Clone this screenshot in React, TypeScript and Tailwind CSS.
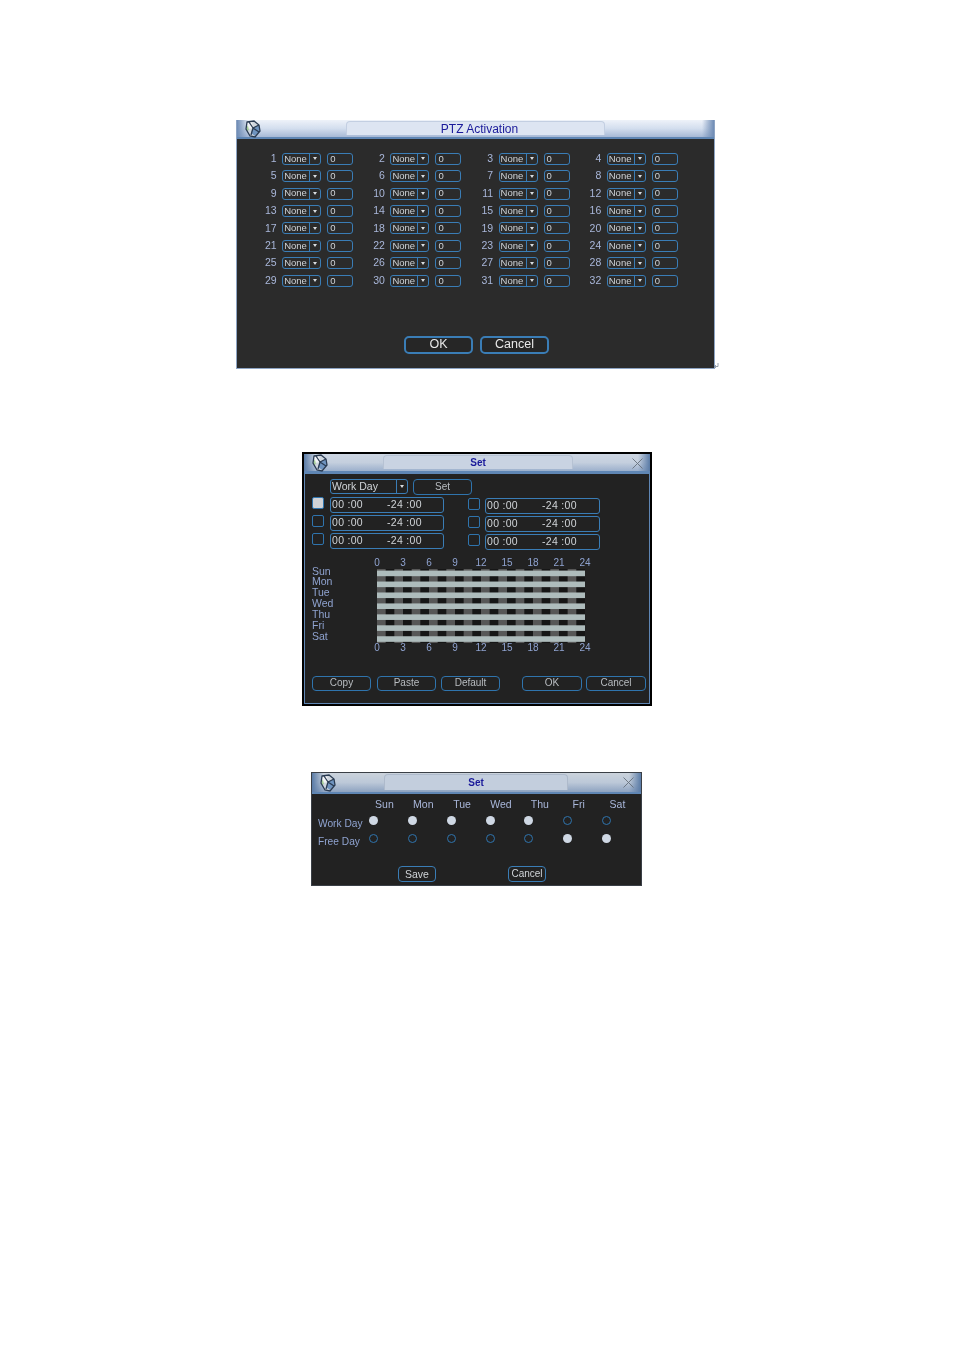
const FONT = { fontFamily: '"Liberation Sans", Arial, sans-serif' };

const HOURS = [0, 3, 6, 9, 12, 15, 18, 21, 24];
const DAYS = ["Sun", "Mon", "Tue", "Wed", "Thu", "Fri", "Sat"];
const WORK = [true, true, true, true, true, false, false];

function Logo() {
  return (
    <svg width="18" height="18" viewBox="0 0 18 18" className="shrink-0">
      <path d="M3 2 L10 1 L15 5 L16 11 L11 17 L6 16 L2 9 Z" fill="#cfd6de" />
      <path d="M3 3 L8 2 L9 8 L4 9 Z" fill="#f2f4f6" />
      <path d="M9 8 L15 5 L16 11 L11 16 L7 13 Z" fill="#6f94c0" />
      <path d="M2 7 L4 6 L5 10 L3 11 Z" fill="#a8cf9a" />
      <path d="M3 2 L10 1 L15 5 L16 11 L11 17 L6 16 L2 9 Z" fill="none" stroke="#2a3b52" strokeWidth="1.3" />
      <path d="M5 2 L9 8 L7 15 M9 8 L15 5 M9 8 L15 12" fill="none" stroke="#2a3b52" strokeWidth="1.3" />
    </svg>
  );
}

function TitleBar({ title, className, tabClassName, close, edge }: { title: string; className: string; tabClassName: string; close?: boolean; edge: string }) {
  return (
    <div className={`flex items-center relative bg-gradient-to-b border-b-2 border-[#5f86b4] ${className}`}>
      <div className={`absolute inset-y-0 left-0 w-[12px] bg-gradient-to-r to-transparent ${edge}`} />
      <div className={`absolute inset-y-0 right-0 w-[12px] bg-gradient-to-l to-transparent ${edge}`} />
      <div className="relative ml-[7px]">
        <Logo />
      </div>
      <div className={`absolute top-[1px] bottom-[2px] rounded-t-[4px] border border-b-0 flex items-center justify-center text-[#1a1a9a] ${tabClassName}`}>
        {title}
      </div>
      {close && (
        <svg width="11" height="11" viewBox="0 0 11 11" className="absolute right-[7px] top-[4px]">
          <path d="M0.5 0.5 L10.5 10.5 M10.5 0.5 L0.5 10.5" stroke="#66707c" strokeWidth="0.9" />
        </svg>
      )}
    </div>
  );
}

function Field({ className, children }: { className: string; children?: React.ReactNode }) {
  return <div className={`border border-[#3a7db6] rounded-[3px] flex items-center shrink-0 text-[#d0d4d8] ${className}`}>{children}</div>;
}

function PtzCell({ n }: { n: number }) {
  return (
    <div className="flex items-center w-[108.2px] h-[17.45px]">
      <span className="w-[31.7px] shrink-0 text-right text-[10.5px] text-[#a9b7da]">{n}</span>
      <Field className="ml-[5.5px] w-[39px] h-[12px] text-[9.5px]">
        <span className="pl-[1px] flex-1">None</span>
        <span className="w-[11px] h-full border-l border-[#3a7db6] flex items-center justify-center">
          <span className="border-x-[2.5px] border-x-transparent border-t-[3px] border-t-[#d8dce0]" />
        </span>
      </Field>
      <Field className="ml-[6px] w-[26px] h-[12px] text-[9.5px] pl-[2px]">0</Field>
    </div>
  );
}

function PtzDialog() {
  return (
    <div className="relative ml-[236px] mt-[120px] w-[479px] h-[249px] flex flex-col border-x border-b border-[#8da4c4] bg-[#2b2b2b] blur-[0.3px]">
      <TitleBar
        title="PTZ Activation"
        className="h-[19px] from-[#eef2f9] via-[#d3deee] to-[#a7b9d6]"
        edge="from-[#6f8cb5]"
        tabClassName="left-[109px] w-[259px] pl-[8px] text-[12px] border-[#c3cfe2] bg-[#dde5f2]"
      />
      <div className="pl-[8px] pt-[11px] flex flex-wrap w-[445px]">
        {Array.from({ length: 32 }, (_, i) => (
          <PtzCell key={i} n={i + 1} />
        ))}
      </div>
      <div className="mt-[46px] ml-[167px] flex gap-[7px]">
        <button className="w-[69px] h-[18px] rounded-[5px] border-2 border-[#3a7db6] text-[12.5px] leading-none text-[#e8e8e8] bg-[#262626]">OK</button>
        <button className="w-[69px] h-[18px] rounded-[5px] border-2 border-[#3a7db6] text-[12.5px] leading-none text-[#e8e8e8] bg-[#262626]">Cancel</button>
      </div>
      <svg width="5" height="5" viewBox="0 0 5 5" className="absolute right-[-5px] bottom-[0px]">
        <path d="M4 0 V3.5 H0.5 M2 2 L0.5 3.5 L2 5" fill="none" stroke="#7f8c99" strokeWidth="0.8" />
      </svg>
    </div>
  );
}

function TimeRow({ mark, w, gap }: { mark?: boolean; w: string; gap: string }) {
  return (
    <div className="flex items-start h-[16px]">
      <span className={`w-[12px] h-[12px] rounded-[2px] border border-[#2f74ad] ${mark ? "bg-[#d0d2d6]" : ""}`} />
      <Field className={`${gap} ${w} h-[16px] text-[10.5px] tracking-[0.3px] pl-[1px]`}>
        <span className="w-[55px]">00 :00</span>
        <span>-24 :00</span>
      </Field>
    </div>
  );
}

function HourRow() {
  return (
    <div className="flex ml-[52px] h-[11px] items-center">
      {HOURS.map((h) => (
        <span key={h} className="w-[26px] text-center text-[10px] leading-none text-[#8fa3d0]">
          {h}
        </span>
      ))}
    </div>
  );
}

function WeekChart() {
  return (
    <svg width="208" height="74" viewBox="0 0 208 74" className="shrink-0">
      <rect width="208" height="74" fill="#161616" />
      {Array.from({ length: 12 }, (_, i) => (
        <rect key={i} x={i * 17.33} y="0" width="8.67" height="74" fill="#575757" />
      ))}
      {DAYS.map((d, i) => (
        <rect key={d} x="0" y={1.6 + i * 10.94} width="208" height="5.6" fill="#aebcbc" />
      ))}
    </svg>
  );
}

function SmallButton({ label, className }: { label: string; className: string }) {
  return (
    <button className={`h-[15.5px] rounded-[4px] border border-[#2f74ad] text-[10px] leading-none text-[#b8bcc0] ${className}`}>{label}</button>
  );
}

function ScheduleDialog() {
  return (
    <div className="ml-[302px] mt-[83px] w-[350px] h-[254px] flex flex-col border-2 border-black bg-[#222222] blur-[0.3px]">
      <TitleBar
        title="Set"
        className="h-[19px] from-[#cdd6e2] via-[#c4cfde] to-[#9cb0cc]"
        edge="from-[#5a7ba6]"
        close
        tabClassName="left-[79px] w-[190px] text-[10px] font-bold border-[#b6c2d3] bg-[#c9d3e2]"
      />
      <div className="flex-1 flex flex-col border border-[#5f86b4] pl-[7px]">
        <div className="flex mt-[5px] ml-[18px] gap-[5px]">
          <Field className="w-[78px] h-[15px] text-[10.5px] pl-[1px]">
            <span className="flex-1">Work Day</span>
            <span className="w-[11px] h-full border-l border-[#3a7db6] flex items-center justify-center">
              <span className="border-x-[2.5px] border-x-transparent border-t-[3px] border-t-[#d8dce0]" />
            </span>
          </Field>
          <SmallButton label="Set" className="w-[59px]" />
        </div>
        <div className="flex mt-[2px] gap-[24px]">
          <div className="flex flex-col gap-[2px]">
            <TimeRow mark w="w-[114px]" gap="ml-[6px]" />
            <TimeRow w="w-[114px]" gap="ml-[6px]" />
            <TimeRow w="w-[114px]" gap="ml-[6px]" />
          </div>
          <div className="flex flex-col gap-[2px] mt-[1px]">
            <TimeRow w="w-[115px]" gap="ml-[5px]" />
            <TimeRow w="w-[115px]" gap="ml-[5px]" />
            <TimeRow w="w-[115px]" gap="ml-[5px]" />
          </div>
        </div>
        <div className="mt-[8px]">
          <HourRow />
        </div>
        <div className="flex h-[74px]">
          <div className="w-[65px] flex flex-col mt-[-3px]">
            {DAYS.map((d) => (
              <span key={d} className="h-[10.85px] text-[10.5px] leading-[11px] text-[#8fa3d0]">
                {d}
              </span>
            ))}
          </div>
          <WeekChart />
        </div>
        <HourRow />
        <div className="flex mt-[22px]">
          <SmallButton label="Copy" className="w-[59px]" />
          <SmallButton label="Paste" className="w-[59px] ml-[6px]" />
          <SmallButton label="Default" className="w-[59px] ml-[5px]" />
          <SmallButton label="OK" className="w-[60px] ml-[22px]" />
          <SmallButton label="Cancel" className="w-[60px] ml-[4px]" />
        </div>
      </div>
    </div>
  );
}

function Radio({ on }: { on: boolean }) {
  return (
    <span className="w-[38.85px] flex">
      <span className={`w-[9px] h-[9px] rounded-full ${on ? "bg-[#cfd8e4]" : "border border-[#2f74ad]"}`} />
    </span>
  );
}

function WeekDialog() {
  return (
    <div className="ml-[311px] mt-[66px] w-[331px] h-[114px] flex flex-col bg-[#222222] border border-[#3a3f46] blur-[0.3px]">
      <TitleBar
        title="Set"
        className="h-[21px] from-[#cbd3dc] via-[#bcc8d8] to-[#8ea3c0]"
        edge="from-[#5a7ba6]"
        close
        tabClassName="left-[72px] w-[184px] text-[10px] font-bold border-[#aebacb] bg-[#c3cedd]"
      />
      <div className="flex mt-[5px] ml-[53px] h-[12px] items-center">
        {DAYS.map((d) => (
          <span key={d} className="w-[38.85px] text-center text-[10.5px] text-[#a9b7da]">
            {d}
          </span>
        ))}
      </div>
      <div className="flex items-center h-[18px]">
        <span className="w-[57px] pl-[6px] text-[10.2px] text-[#8fa3d0] whitespace-nowrap pt-[8px]">Work Day</span>
        {WORK.map((on, i) => (
          <Radio key={i} on={on} />
        ))}
      </div>
      <div className="flex items-center h-[18px]">
        <span className="w-[57px] pl-[6px] text-[10.2px] text-[#8fa3d0] whitespace-nowrap pt-[8px]">Free Day</span>
        {WORK.map((on, i) => (
          <Radio key={i} on={!on} />
        ))}
      </div>
      <div className="flex mt-[19px] ml-[86px] gap-[72px]">
        <button className="w-[38px] h-[16px] rounded-[4px] border border-[#3a7db6] text-[10.5px] leading-none text-[#d0d4d8]">Save</button>
        <button className="w-[38px] h-[16px] rounded-[4px] border border-[#3a7db6] text-[10px] leading-none text-[#d0d4d8]">Cancel</button>
      </div>
    </div>
  );
}

export default function App() {
  return (
    <div className="w-[954px] h-[1350px] bg-white flex flex-col overflow-hidden" style={FONT}>
      <PtzDialog />
      <ScheduleDialog />
      <WeekDialog />
    </div>
  );
}
